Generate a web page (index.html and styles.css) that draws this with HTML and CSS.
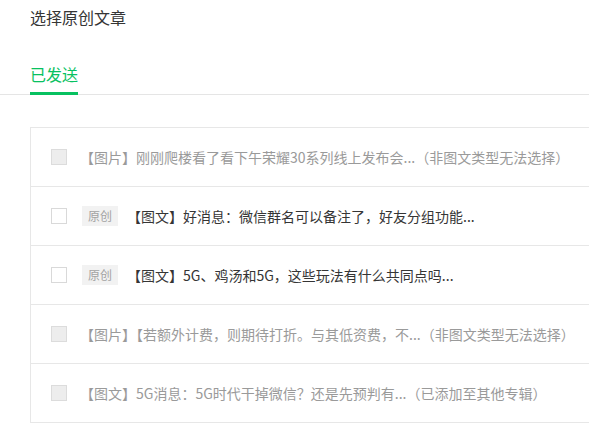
FILE: index.html
```html
<!DOCTYPE html>
<html lang="zh-CN">
<head>
  <meta charset="UTF-8" />
  <meta name="viewport" content="width=device-width, initial-scale=1.0" />
  <title>选择原创文章</title>
  <link rel="stylesheet" href="styles.css">
</head>
<body>
  <div class="page">
    <h2 class="title">选择原创文章</h2>
    <div class="tabs">
      <span class="tab active">已发送</span>
    </div>
    <ul class="list">
      <li class="item disabled">
        <span class="check"></span>
        <span class="text">【图片】刚刚爬楼看了看下午荣耀30系列线上发布会...（非图文类型无法选择）</span>
      </li>
      <li class="item">
        <span class="check"></span>
        <span class="tag">原创</span>
        <span class="text">【图文】好消息：微信群名可以备注了，好友分组功能...</span>
      </li>
      <li class="item">
        <span class="check"></span>
        <span class="tag">原创</span>
        <span class="text">【图文】5G、鸡汤和5G，这些玩法有什么共同点吗...</span>
      </li>
      <li class="item disabled">
        <span class="check"></span>
        <span class="text">【图片】【若额外计费，则期待打折。与其低资费，不...（非图文类型无法选择）</span>
      </li>
      <li class="item disabled">
        <span class="check"></span>
        <span class="text">【图文】5G消息：5G时代干掉微信？还是先预判有...（已添加至其他专辑）</span>
      </li>
    </ul>
  </div>
</body>
</html>
```

FILE: styles.css
```css
body {
  font-family: "Noto Sans CJK SC", "Noto Sans", sans-serif;
  color: #353535;
  background: #fff;
  margin: 0;
  overflow: hidden;
}
.page {
  padding-top: 5px;
}
.title {
  margin: 0 0 0 30px;
  font-size: 16px;
  font-weight: normal;
  line-height: 24px;
}
.tabs {
  margin-top: 33px;
  padding-left: 30px;
  border-bottom: 1px solid #e5e5e5;
  display: flex;
}
.tab {
  font-size: 16px;
  line-height: 24px;
  padding-bottom: 6px;
  margin-bottom: -1px;
}
.tab.active {
  color: #07c160;
  border-bottom: 3px solid #07c160;
}
.list {
  list-style: none;
  margin: 32px 0 0 30px;
  padding: 0;
  width: 600px;
  border: 1px solid #e7e7e7;
  border-bottom: none;
}
.item {
  display: flex;
  align-items: center;
  height: 58px;
  padding-left: 20px;
  border-bottom: 1px solid #e7e7e7;
  font-size: 14px;
}
.check {
  width: 14px;
  height: 14px;
  border: 1px solid #d9d9d9;
  background: #fff;
  flex-shrink: 0;
  margin-right: 13px;
}
.disabled .check {
  background: #ededed;
  border-color: #dcdcdc;
}
.disabled .text {
  color: #9a9a9a;
}
.tag {
  font-size: 12px;
  color: #a3a3a3;
  background: #f2f2f2;
  padding: 0 6px;
  line-height: 20px;
  margin: 0 9px 0 2px;
}
.text {
  white-space: nowrap;
}
```
